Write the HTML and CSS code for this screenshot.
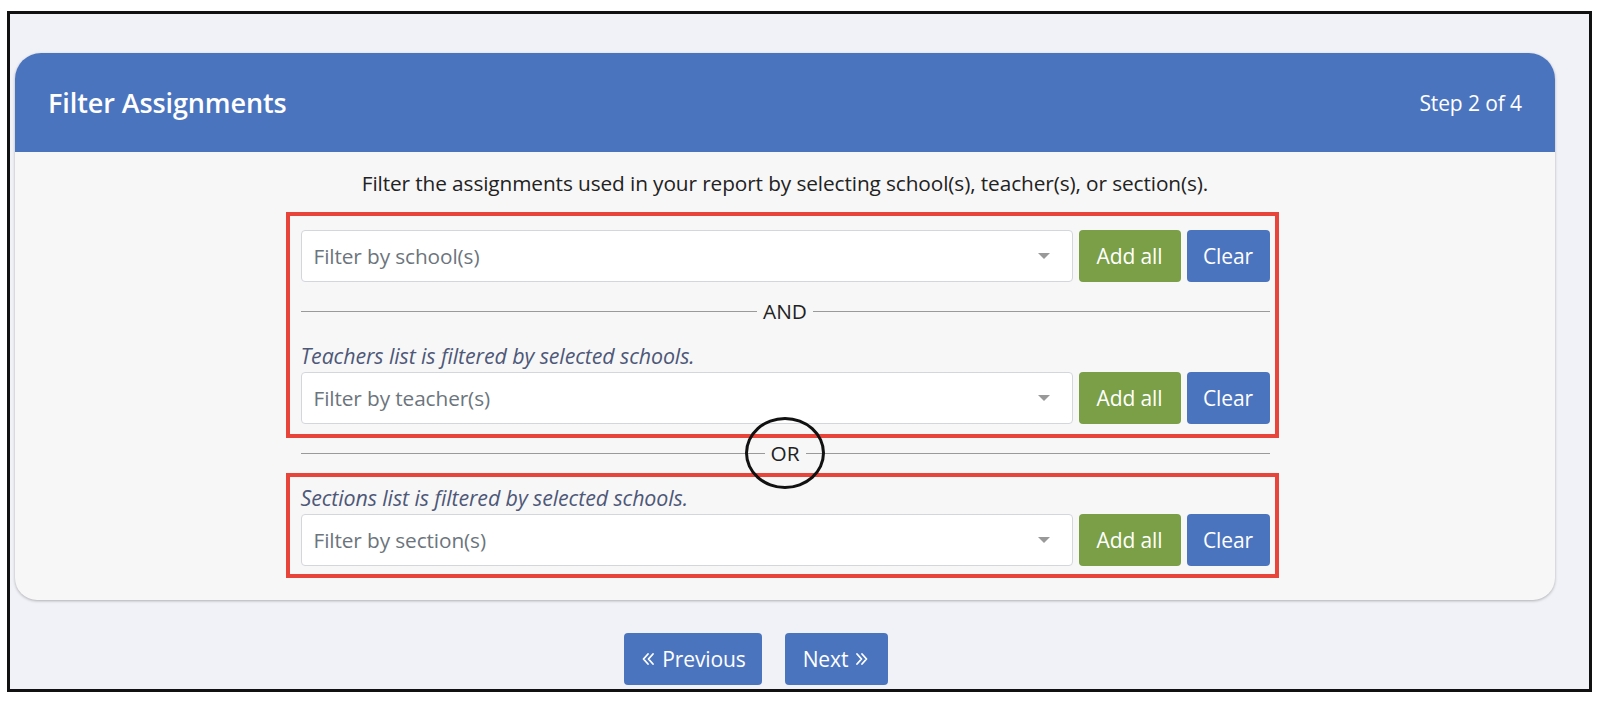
FILE: index.html
```html
<!DOCTYPE html>
<html lang="en">
<head>
<meta charset="utf-8">
<title>Filter Assignments</title>
<link rel="stylesheet" href="styles.css">
</head>
<body>
<div class="frame">
  <div class="page">
    <section class="card">
      <header class="card-header">
        <h1 class="card-title">Filter Assignments</h1>
        <span class="step">Step 2 of 4</span>
      </header>
      <div class="card-body">
        <p class="intro">Filter the assignments used in your report by selecting school(s), teacher(s), or section(s).</p>
        <div class="filters">
          <div class="annot annot-first">
            <div class="filter-row">
              <div class="select"><span class="placeholder">Filter by school(s)</span><span class="caret"></span></div>
              <button class="btn btn-green">Add all</button>
              <button class="btn btn-blue">Clear</button>
            </div>
            <div class="sep sep-and"><span class="sep-label">AND</span></div>
            <p class="hint">Teachers list is filtered by selected schools.</p>
            <div class="filter-row">
              <div class="select"><span class="placeholder">Filter by teacher(s)</span><span class="caret"></span></div>
              <button class="btn btn-green">Add all</button>
              <button class="btn btn-blue">Clear</button>
            </div>
          </div>
          <div class="sep sep-or"><span class="sep-label or-label">OR</span></div>
          <div class="annot annot-second">
            <p class="hint">Sections list is filtered by selected schools.</p>
            <div class="filter-row">
              <div class="select"><span class="placeholder">Filter by section(s)</span><span class="caret"></span></div>
              <button class="btn btn-green">Add all</button>
              <button class="btn btn-blue">Clear</button>
            </div>
          </div>
        </div>
      </div>
    </section>
    <nav class="wizard-nav">
      <button class="btn btn-blue nav-btn btn-prev"><svg class="chev" viewBox="0 0 16 16" width="16" height="16"><path d="M8 3 L3.5 8 L8 13 M13 3 L8.5 8 L13 13"/></svg>Previous</button>
      <button class="btn btn-blue nav-btn btn-next">Next<svg class="chev" viewBox="0 0 16 16" width="16" height="16"><path d="M3 3 L7.5 8 L3 13 M8 3 L12.5 8 L8 13"/></svg></button>
    </nav>
  </div>
</div>
</body>
</html>
```

FILE: styles.css
```css
* { box-sizing: border-box; }

html, body {
  margin: 0;
  padding: 0;
  background: #ffffff;
}

body {
  font-family: "Open Sans", "Noto Sans", "Liberation Sans", sans-serif;
  color: #212529;
}

.frame {
  margin: 11px 8px 0 7px;
  height: 681px;
  border: 3px solid #111;
  background: #f1f2f7;
  overflow: hidden;
}

.page {
  padding: 39px 34px 0 5px;
}

.card {
  background: #f7f7f7;
  border-radius: 26px 26px 22px 22px;
  box-shadow: 0 1px 3px rgba(0, 0, 0, 0.28);
  overflow: hidden;
}

.card-header {
  height: 99px;
  background: #4b74bf;
  color: #fff;
  display: flex;
  align-items: center;
  justify-content: space-between;
  padding: 0 33px;
}

.card-title {
  margin: 0;
  font-size: 27px;
  font-weight: 600;
  letter-spacing: -0.1px;
}

.step {
  font-size: 21px;
  letter-spacing: -0.1px;
}

.card-body {
  padding: 19px 0 22px;
}

.intro {
  margin: 0 0 17px;
  text-align: center;
  font-size: 20.8px;
  line-height: 24px;
  letter-spacing: -0.1px;
  color: #222;
}

.filters {
  width: 969px;
  margin: 0 auto;
}

.annot {
  margin: 0 -9px 0 -15px;
  border: 4px solid #e8443a;
  padding: 14px 5px 10px 11px;
}

.annot-second {
  margin-top: 8px;
  padding: 9px 5px 8px 11px;
}

.filter-row {
  display: flex;
  gap: 6px;
  height: 52px;
}

.select {
  flex: 1;
  background: #fff;
  border: 1px solid #d3d6db;
  border-radius: 4px;
  display: flex;
  align-items: center;
  justify-content: space-between;
  padding: 0 22px 0 12px;
}

.placeholder {
  font-size: 20.8px;
  color: #6c757d;
  letter-spacing: -0.1px;
}

.caret {
  width: 0;
  height: 0;
  border-left: 6px solid transparent;
  border-right: 6px solid transparent;
  border-top: 6px solid #999;
}

.btn {
  border: 0;
  border-radius: 4px;
  color: #fff;
  font-family: inherit;
  font-size: 21px;
  letter-spacing: -0.1px;
  padding: 0;
  cursor: pointer;
}

.btn-green {
  width: 102px;
  background: #7a9f46;
}

.btn-blue {
  width: 83px;
  background: #4b74bf;
}

.sep {
  display: flex;
  align-items: center;
  height: 24px;
}

.sep::before,
.sep::after {
  content: "";
  flex: 1;
  height: 1px;
  background: #9a9a9a;
}

.sep-and {
  margin-top: 17px;
}

.sep-or {
  margin-top: 3px;
}

.sep-label {
  font-size: 20.8px;
  line-height: 24px;
  padding: 0 6px;
  color: #222;
}

.or-label {
  position: relative;
}

.or-label::after {
  content: "";
  position: absolute;
  left: 50%;
  top: 50%;
  width: 74px;
  height: 66px;
  transform: translate(-50%, -50%);
  border: 3px solid #111;
  border-radius: 50%;
}

.hint {
  margin: 0 0 4px;
  font-size: 21.4px;
  line-height: 24px;
  font-style: italic;
  color: #4e5878;
  letter-spacing: -0.1px;
}

.sep-and + .hint {
  margin-top: 21px;
}

.wizard-nav {
  display: flex;
  justify-content: center;
  gap: 23px;
  margin-top: 33px;
  padding-right: 58px;
}

.nav-btn {
  height: 52px;
  display: inline-flex;
  align-items: center;
  justify-content: center;
  gap: 6px;
}

.btn-prev {
  width: 138px;
}

.btn-next {
  width: 103px;
}

.chev {
  fill: none;
  stroke: #fff;
  stroke-width: 1.8;
  stroke-linecap: round;
  stroke-linejoin: round;
}
```
